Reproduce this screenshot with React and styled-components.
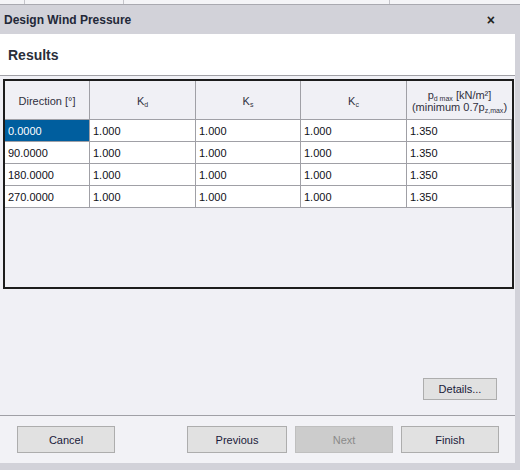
import React from "react";
import styled, { createGlobalStyle } from "styled-components";

const GlobalStyle = createGlobalStyle`
  html, body {
    margin: 0;
    padding: 0;
    background: #d2d2d9;
  }
  * {
    box-sizing: border-box;
  }
`;

const Screen = styled.div`
  width: 520px;
  height: 470px;
  display: flex;
  flex-direction: column;
  background: #d2d2d9;
  font-family: Tahoma, "Liberation Sans", Arial, sans-serif;
  font-size: 11px;
  color: #1a1a2a;
  overflow: hidden;
`;

const BackStrip = styled.div`
  height: 5px;
  display: flex;
  background: #f4f4f7;
  border-bottom: 1px solid #a9a9b0;
`;

const BackCell = styled.div`
  width: ${(p) => p.$w}px;
  border-right: 1px solid #c4c4ca;
`;

const TitleBar = styled.div`
  height: 29px;
  display: flex;
  align-items: center;
  justify-content: space-between;
  padding: 0 25px 0 4px;
  font-weight: bold;
  font-size: 12px;
  color: #232838;
`;

const Close = styled.span`
  font-size: 14px;
  font-weight: bold;
  color: #222;
  line-height: 1;
`;

const Dialog = styled.div`
  width: 515px;
  flex: 1;
  margin-bottom: 7px;
  display: flex;
  flex-direction: column;
  background: #f0f0f5;
`;

const PageHeader = styled.div`
  height: 42px;
  background: #ffffff;
  border-bottom: 1px solid #a0a0a6;
  display: flex;
  align-items: center;
  padding-left: 8px;
  font-size: 14px;
  font-weight: bold;
  color: #2a2e3a;
`;

const Body = styled.div`
  flex: 1;
  display: flex;
  flex-direction: column;
  padding: 3px 2px 15px 3px;
`;

const Grid = styled.div`
  height: 210px;
  width: 511px;
  border: 2px solid #1c1c1c;
  background: #f0f0f5;
  display: grid;
  grid-template-columns: 85px 106px 105px 106px 105px;
  grid-template-rows: 39px repeat(4, 22px);
  align-content: start;
`;

const HeadCell = styled.div`
  border-right: ${(p) => (p.$last ? "none" : "1px solid #a0a0a6")};
  border-bottom: 1px solid #a0a0a6;
  display: flex;
  flex-direction: column;
  align-items: center;
  justify-content: center;
  text-align: center;
  color: #303040;
  line-height: 12px;
  padding-top: 1px;
`;

const HeadLine = styled.span`
  display: block;
  height: 12px;
`;

const Cell = styled.div`
  border-right: 1px solid #a0a0a6;
  border-bottom: 1px solid #a0a0a6;
  background: ${(p) => (p.$selected ? "#005e9e" : "#ffffff")};
  color: ${(p) => (p.$selected ? "#ffffff" : "#101018")};
  display: flex;
  align-items: center;
  padding-left: 3px;
`;

const Sub = styled.sub`
  font-size: 7px;
  vertical-align: -2px;
  line-height: 0;
`;

const DetailsRow = styled.div`
  margin-top: auto;
  display: flex;
  justify-content: flex-end;
  padding-right: 16px;
`;

const Button = styled.button`
  width: ${(p) => p.$w || 98}px;
  height: ${(p) => p.$h || 27}px;
  font-family: inherit;
  font-size: 11px;
  color: ${(p) => (p.disabled ? "#8a8a8a" : "#1a1a3a")};
  background: ${(p) => (p.disabled ? "#cccccc" : "#e1e1e1")};
  border: 1px solid ${(p) => (p.disabled ? "#bfbfbf" : "#adadad")};
  border-radius: 0;
  padding: 0;
`;

const Footer = styled.div`
  height: 48px;
  border-top: 1px solid #a0a0a6;
  background: #f2f2f6;
  display: flex;
  align-items: flex-start;
  padding: 10px 16px 0 17px;
`;

const NavGroup = styled.div`
  margin-left: auto;
  display: flex;
  gap: 8px;
`;

const rows = ["0.0000", "90.0000", "180.0000", "270.0000"];

export default function App() {
  return (
    <>
      <GlobalStyle />
      <Screen>
        <BackStrip>
          <BackCell $w={25} />
          <BackCell $w={99} />
          <BackCell $w={266} />
        </BackStrip>
        <TitleBar>
          <span>Design Wind Pressure</span>
          <Close>×</Close>
        </TitleBar>
        <Dialog>
          <PageHeader>Results</PageHeader>
          <Body>
            <Grid>
              <HeadCell>Direction [°]</HeadCell>
              <HeadCell>
                <span>
                  K<Sub>d</Sub>
                </span>
              </HeadCell>
              <HeadCell>
                <span>
                  K<Sub>s</Sub>
                </span>
              </HeadCell>
              <HeadCell>
                <span>
                  K<Sub>c</Sub>
                </span>
              </HeadCell>
              <HeadCell $last>
                <HeadLine>
                  p<Sub>d max</Sub> [kN/m²]
                </HeadLine>
                <HeadLine>
                  (minimum 0.7p<Sub>z,max</Sub>)
                </HeadLine>
              </HeadCell>
              {rows.map((dir, i) => (
                <React.Fragment key={dir}>
                  <Cell $selected={i === 0}>{dir}</Cell>
                  <Cell>1.000</Cell>
                  <Cell>1.000</Cell>
                  <Cell>1.000</Cell>
                  <Cell>1.350</Cell>
                </React.Fragment>
              ))}
            </Grid>
            <DetailsRow>
              <Button $w={74} $h={22}>
                Details...
              </Button>
            </DetailsRow>
          </Body>
          <Footer>
            <Button>Cancel</Button>
            <NavGroup>
              <Button $w={100}>Previous</Button>
              <Button disabled>Next</Button>
              <Button>Finish</Button>
            </NavGroup>
          </Footer>
        </Dialog>
      </Screen>
    </>
  );
}
